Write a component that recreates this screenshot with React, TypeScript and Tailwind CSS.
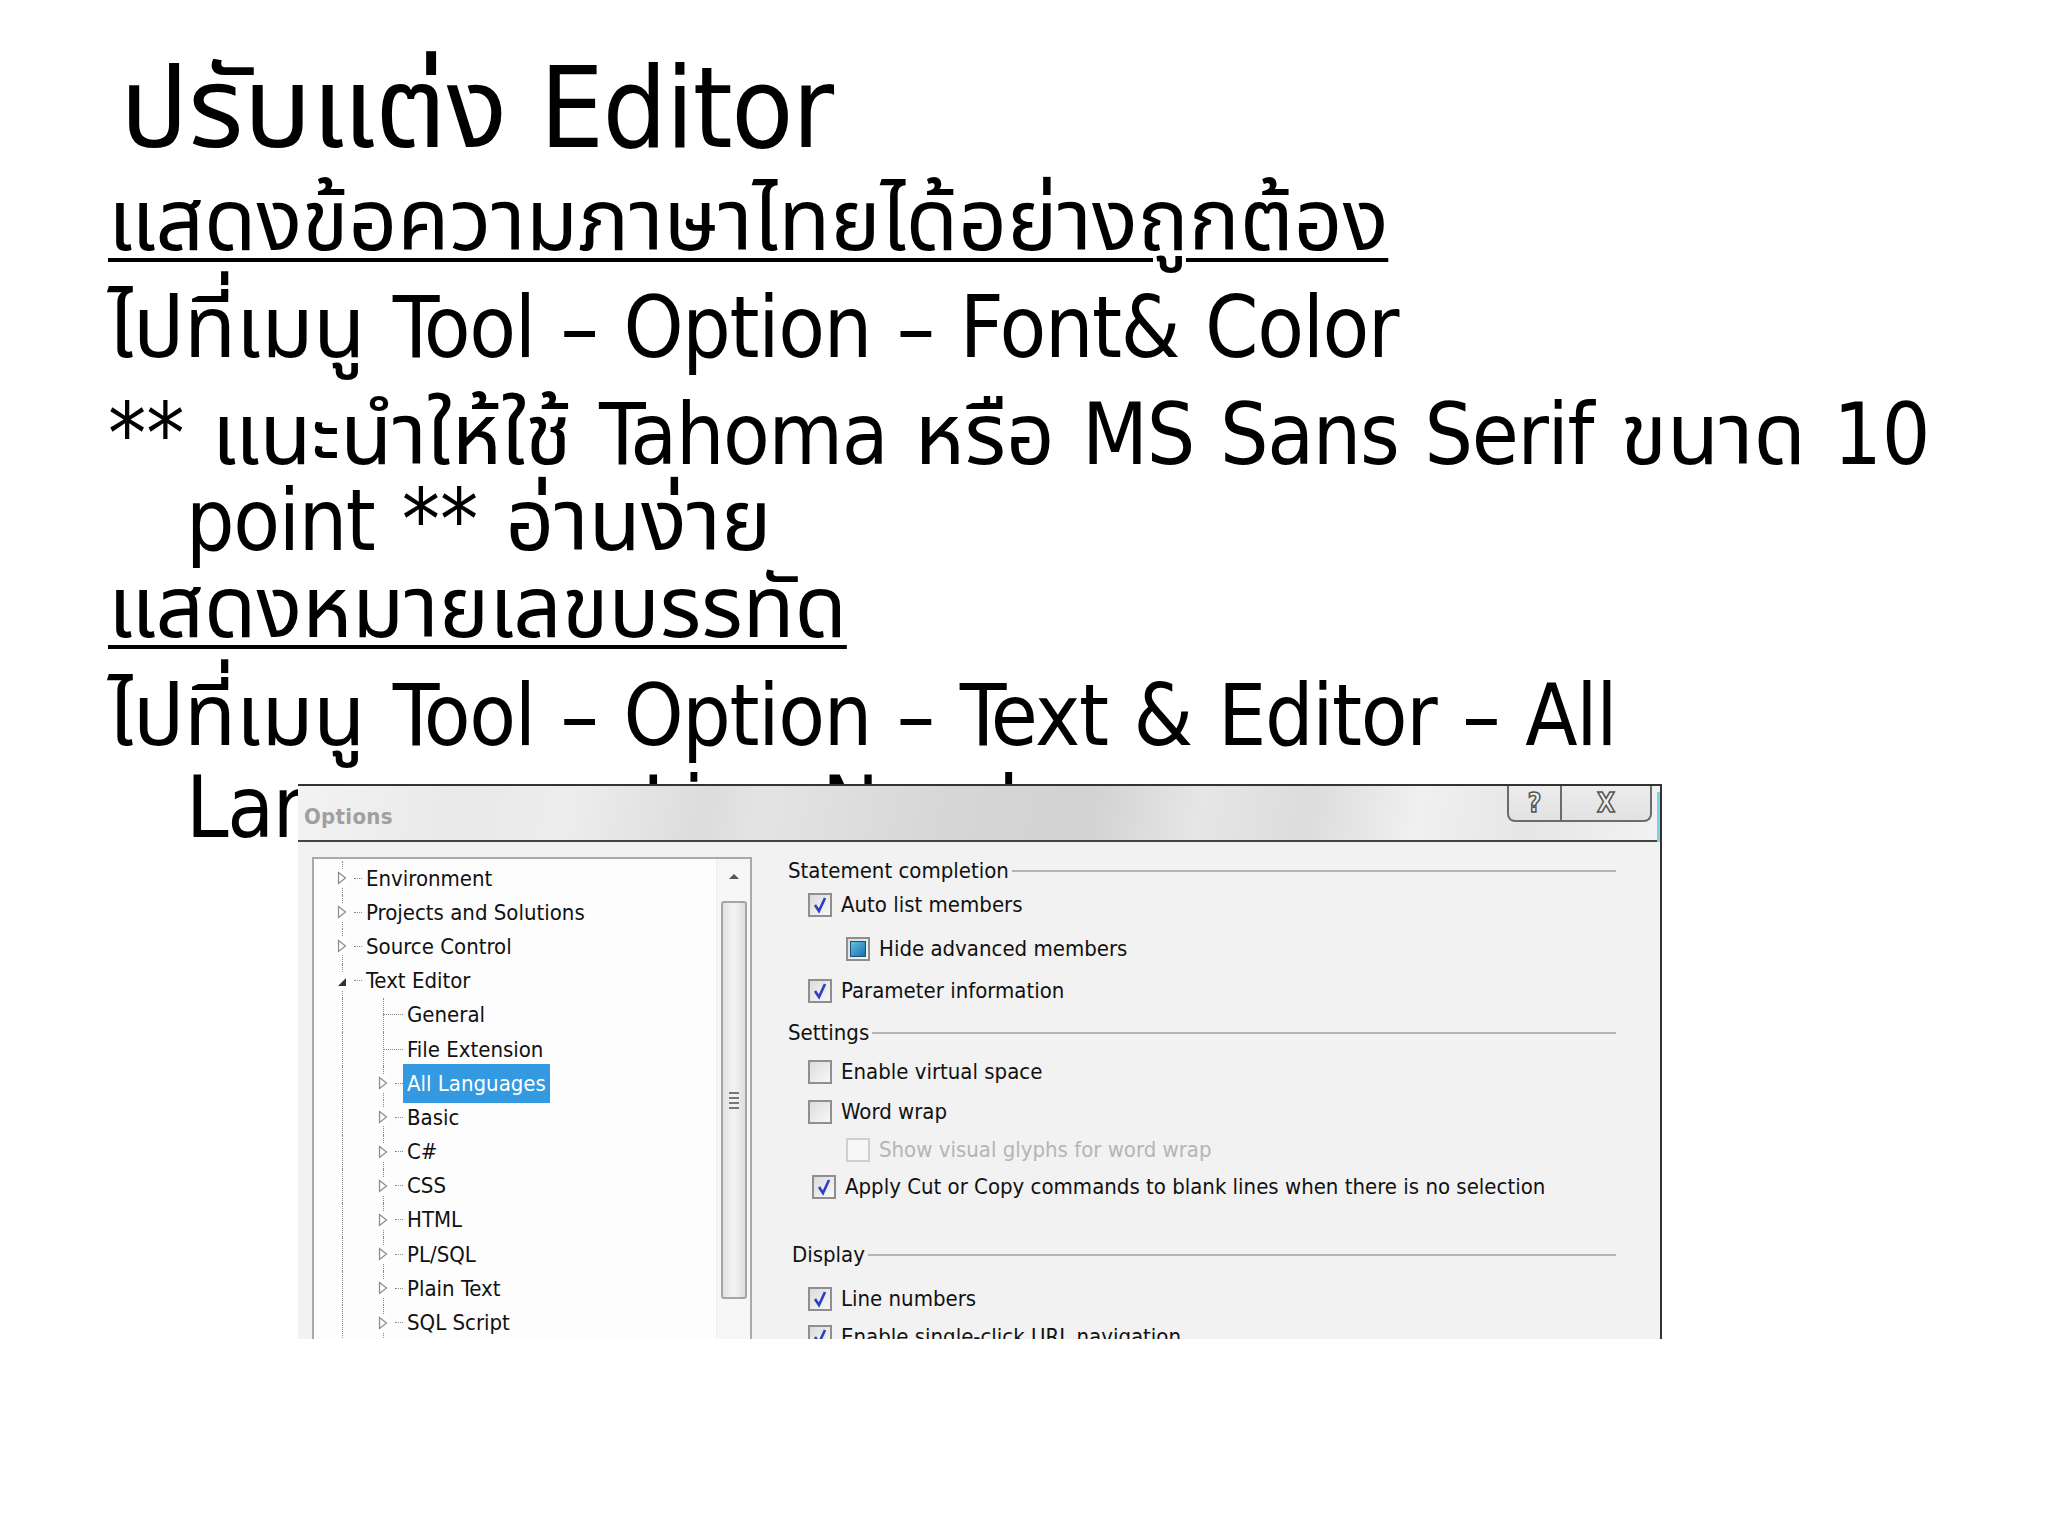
import React from 'react';

const slideFont =
  "'DejaVu Sans Condensed', 'DejaVu Sans', 'Noto Sans Thai', 'Noto Sans Thai UI', 'Noto Sans', Loma, Garuda, sans-serif";
const uiFont = "'DejaVu Sans Condensed', 'DejaVu Sans', Tahoma, sans-serif";

type Node = {
  label: string;
  level: 0 | 1;
  expander?: 'closed' | 'open';
  selected?: boolean;
};

const tree: Node[] = [
  { label: 'Environment', level: 0, expander: 'closed' },
  { label: 'Projects and Solutions', level: 0, expander: 'closed' },
  { label: 'Source Control', level: 0, expander: 'closed' },
  { label: 'Text Editor', level: 0, expander: 'open' },
  { label: 'General', level: 1 },
  { label: 'File Extension', level: 1 },
  { label: 'All Languages', level: 1, expander: 'closed', selected: true },
  { label: 'Basic', level: 1, expander: 'closed' },
  { label: 'C#', level: 1, expander: 'closed' },
  { label: 'CSS', level: 1, expander: 'closed' },
  { label: 'HTML', level: 1, expander: 'closed' },
  { label: 'PL/SQL', level: 1, expander: 'closed' },
  { label: 'Plain Text', level: 1, expander: 'closed' },
  { label: 'SQL Script', level: 1, expander: 'closed' },
];

// latin runs are a little wide in DejaVu compared to Tahoma
function L({ children }: { children: React.ReactNode }) {
  return <span className="tracking-[-1.3px]">{children}</span>;
}

function Expander({ kind }: { kind: 'closed' | 'open' }) {
  if (kind === 'open') {
    return (
      <svg width="12" height="18" viewBox="0 0 12 18" className="relative z-10 bg-white">
        <path d="M2 14 L10 6 L10 14 Z" fill="#333" />
      </svg>
    );
  }
  return (
    <svg width="12" height="18" viewBox="0 0 12 18" className="relative z-10 bg-white">
      <path d="M2.5 3.5 L9.5 9 L2.5 14.5 Z" fill="#fff" stroke="#8e8e8e" strokeWidth="1.3" />
    </svg>
  );
}

function Gutter({ expander, line = true }: { expander?: 'closed' | 'open'; line?: boolean }) {
  return (
    <div className="relative flex h-full w-[24px] shrink-0 items-center justify-center">
      {line && <div className="absolute top-0 bottom-0 left-[12px] border-l border-dotted border-[#8a8a8a]" />}
      {expander && <Expander kind={expander} />}
    </div>
  );
}

function TreeRow({ node }: { node: Node }) {
  return (
    <div className="flex h-[34.2px] items-center">
      <Gutter expander={node.level === 0 ? node.expander : undefined} />
      {node.level === 1 && (
        <>
          <div className="w-[17px] shrink-0" />
          <Gutter expander={node.expander} />
        </>
      )}
      <div
        className={
          node.level === 1 && !node.expander
            ? 'ml-[-12px] mr-[4px] w-[20px] shrink-0 border-t border-dotted border-[#8a8a8a]'
            : 'mr-[4px] w-[8px] shrink-0 border-t border-dotted border-[#8a8a8a]'
        }
      />
      <span
        className={
          node.selected
            ? 'ml-[-4px] bg-[#3399e0] px-[4px] py-[3px] text-white'
            : 'text-[#111]'
        }
      >
        {node.label}
      </span>
    </div>
  );
}

function Check({ state, disabled }: { state: 'on' | 'off' | 'mixed'; disabled?: boolean }) {
  return (
    <div
      className={
        'flex h-[24px] w-[24px] shrink-0 items-center justify-center border-2 ' +
        (disabled ? 'border-[#cfcfcf] bg-[#f7f7f7]' : 'border-[#8f8f8f] bg-[linear-gradient(135deg,#dcdcdc,#f8f8f8)]')
      }
    >
      {state === 'on' && (
        <svg width="18" height="18" viewBox="0 0 18 18">
          <path d="M4 9 L8 15 L14 2" fill="none" stroke="#2b3fc2" strokeWidth="2.6" />
        </svg>
      )}
      {state === 'mixed' && (
        <div className="h-[16px] w-[16px] border border-[#1b4f79] bg-[linear-gradient(135deg,#5fc1e8,#1a6fa8)]" />
      )}
    </div>
  );
}

function Option({
  label,
  state,
  indent,
  disabled,
  className = '',
}: {
  label: string;
  state: 'on' | 'off' | 'mixed';
  indent?: boolean;
  disabled?: boolean;
  className?: string;
}) {
  return (
    <div className={'flex items-center gap-[9px] ' + (indent ? 'pl-[58px] ' : 'pl-[20px] ') + className}>
      <Check state={state} disabled={disabled} />
      <span className={disabled ? 'text-[#b5b5b5]' : 'text-[#111]'}>{label}</span>
    </div>
  );
}

function Group({ title, className = '' }: { title: string; className?: string }) {
  return (
    <div className={'flex items-center ' + className}>
      <span className="text-[#111]">{title}</span>
      <div className="ml-[3px] mr-[44px] h-[2px] flex-1 bg-[#b4b4b4]" />
    </div>
  );
}

function OptionsDialog() {
  return (
    <div
      className="absolute left-[298px] top-[784px] flex h-[555px] w-[1364px] flex-col overflow-hidden border-t-2 border-r-2 border-[#333] bg-[#f2f2f2]"
      style={{ fontFamily: uiFont }}
    >
      <div className="relative flex h-[56px] shrink-0 items-center border-b-2 border-[#444] bg-[linear-gradient(100deg,#f3f3f3_0%,#e9e9e9_12%,#ededed_20%,#dcdcdc_30%,#e4e4e4_34%,#d6d6d6_48%,#d2d2d2_58%,#e6e6e6_66%,#dcdcdc_74%,#f0f0f0_82%,#e6e6e6_90%,#f2f2f2_100%)] pl-[6px] pt-[6px]">
        <span className="text-[22px] font-bold tracking-[0.3px] text-[#a0a0a0]">Options</span>
        <div className="absolute right-[8px] top-0 flex h-[36px] overflow-hidden rounded-b-[8px] border-x-2 border-b-2 border-[#6b6b6b] bg-[linear-gradient(#ececec,#e2e2e2)]">
          <div className="flex w-[53px] items-center justify-center border-r-2 border-[#6b6b6b] text-[26px] font-bold text-[#eee] [-webkit-text-stroke:1.5px_#555]">
            ?
          </div>
          <div className="flex w-[88px] items-center justify-center text-[26px] font-bold text-[#eee] [-webkit-text-stroke:1.5px_#555]">
            X
          </div>
        </div>
        <div className="absolute right-0 top-[6px] h-[50px] w-[3px] bg-[#7fd3e0]" />
      </div>

      <div className="flex flex-1 gap-[36px] pl-[14px] pt-[15px]">
        <div className="flex h-[600px] w-[440px] shrink-0 border-2 border-[#a9a9a9] bg-[#fdfdfd] text-[22px]">
          <div className="flex-1 pl-[16px] pt-[2px]">
            {tree.map((n) => (
              <TreeRow key={n.label} node={n} />
            ))}
          </div>
          <div className="flex w-[34px] shrink-0 flex-col items-center border-l border-[#ededed] bg-[#f6f6f6] pt-[12px]">
            <svg width="14" height="10" viewBox="0 0 14 10">
              <path d="M2 8 L7 3 L12 8 Z" fill="#555" />
            </svg>
            <div className="mt-[20px] flex h-[398px] w-[26px] items-center justify-center rounded-[3px] border-2 border-[#a5a5a5] bg-[linear-gradient(90deg,#e2e2e2,#f4f4f4,#dedede)]">
              <div className="flex flex-col gap-[3px]">
                <div className="h-[2px] w-[10px] bg-[#777]" />
                <div className="h-[2px] w-[10px] bg-[#777]" />
                <div className="h-[2px] w-[10px] bg-[#777]" />
                <div className="h-[2px] w-[10px] bg-[#777]" />
              </div>
            </div>
          </div>
        </div>

        <div className="flex flex-1 flex-col pt-[4px] text-[22px] leading-[26px]">
          <Group title="Statement completion" className="mt-[-3px]" />
          <Option label="Auto list members" state="on" className="mt-[8px]" />
          <Option label="Hide advanced members" state="mixed" indent className="mt-[18px]" />
          <Option label="Parameter information" state="on" className="mt-[16px]" />
          <Group title="Settings" className="mt-[16px]" />
          <Option label="Enable virtual space" state="off" className="mt-[13px]" />
          <Option label="Word wrap" state="off" className="mt-[14px]" />
          <Option label="Show visual glyphs for word wrap" state="off" indent disabled className="mt-[12px]" />
          <Option
            label="Apply Cut or Copy commands to blank lines when there is no selection"
            state="on"
            className="mt-[11px] !pl-[24px]"
          />
          <Group title="Display" className="mt-[42px] pl-[4px]" />
          <Option label="Line numbers" state="on" className="mt-[18px]" />
          <Option label="Enable single-click URL navigation" state="on" className="mt-[12px]" />
        </div>
      </div>
    </div>
  );
}

export default function App() {
  return (
    <div className="relative h-[1536px] w-[2048px] overflow-hidden bg-white text-black" style={{ fontFamily: slideFont }}>
      <div className="w-[1950px] pl-[108px] pt-[46px]">
        <h1 className="pl-[12px] text-[113px] leading-[124px]">
          ปรับแต่ง <L>Editor</L>
        </h1>
        <div className="mt-[8px] text-[85px] leading-[86px] [word-spacing:3px]">
          <p className="underline decoration-[4px] underline-offset-[8px]">แสดงข้อความภาษาไทยได้อย่างถูกต้อง</p>
          <p className="mt-[21px]">
            ไปที่เมนู <L>Tool – Option – Font&amp; Color</L>
          </p>
          <p className="mt-[21px] pl-[78px] -indent-[78px]">
            ** แนะนำให้ใช้ <L>Tahoma</L> หรือ <L>MS Sans Serif</L> ขนาด 10 <L>point</L> ** อ่านง่าย
          </p>
          <p className="mt-[1px] underline decoration-[4px] underline-offset-[8px]">แสดงหมายเลขบรรทัด</p>
          <p className="mt-[19px] pl-[78px] -indent-[78px] leading-[92px]">
            ไปที่เมนู <L>Tool – Option – Text &amp; Editor – All Language – Line Number</L>
          </p>
        </div>
      </div>
      <OptionsDialog />
    </div>
  );
}
